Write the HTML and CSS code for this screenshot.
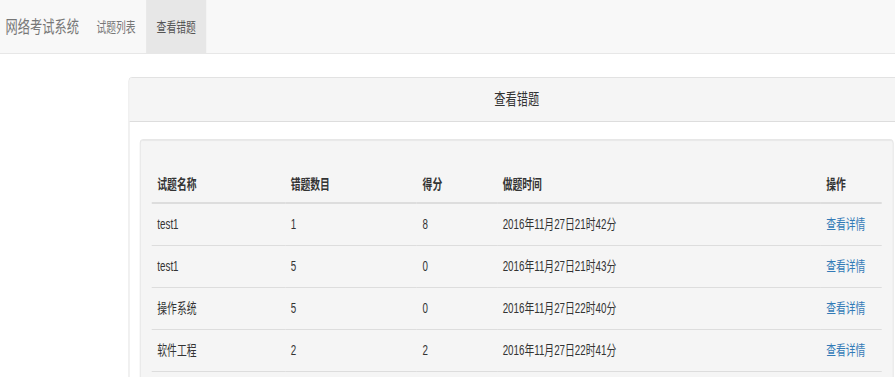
FILE: index.html
```html
<!DOCTYPE html>
<html lang="zh-CN">
<head>
    <meta charset="UTF-8">
    <meta name="viewport" content="width=device-width, initial-scale=1.0">
    <title>查看错题</title>
    <link rel="stylesheet" href="styles.css">
</head>
<body>
    <div class="page">
        <nav class="navbar">
            <a class="brand" href="#">网络考试系统</a>
            <ul class="nav">
                <li><a href="#">试题列表</a></li>
                <li class="active"><a href="#">查看错题</a></li>
            </ul>
        </nav>

        <div class="main">
            <div class="panel">
                <div class="panel-heading">查看错题</div>
                <div class="panel-body">
                    <div class="well">
                        <table class="table">
                            <thead>
                                <tr>
                                    <th class="col-name">试题名称</th>
                                    <th class="col-wrong">错题数目</th>
                                    <th class="col-score">得分</th>
                                    <th class="col-time">做题时间</th>
                                    <th class="col-op">操作</th>
                                </tr>
                            </thead>
                            <tbody>
                                <tr>
                                    <td>test1</td>
                                    <td>1</td>
                                    <td>8</td>
                                    <td>2016年11月27日21时42分</td>
                                    <td><a href="#">查看详情</a></td>
                                </tr>
                                <tr>
                                    <td>test1</td>
                                    <td>5</td>
                                    <td>0</td>
                                    <td>2016年11月27日21时43分</td>
                                    <td><a href="#">查看详情</a></td>
                                </tr>
                                <tr>
                                    <td>操作系统</td>
                                    <td>5</td>
                                    <td>0</td>
                                    <td>2016年11月27日22时40分</td>
                                    <td><a href="#">查看详情</a></td>
                                </tr>
                                <tr>
                                    <td>软件工程</td>
                                    <td>2</td>
                                    <td>2</td>
                                    <td>2016年11月27日22时41分</td>
                                    <td><a href="#">查看详情</a></td>
                                </tr>
                            </tbody>
                        </table>
                    </div>
                </div>
            </div>
        </div>
    </div>
</body>
</html>
```

FILE: styles.css
```css
html, body {
    margin: 0;
    background: #fff;
}

body {
    font-family: "Liberation Sans", Arial, "Noto Sans CJK SC", sans-serif;
    font-size: 14px;
    line-height: 20px;
    color: #333;
    overflow: hidden;
}

/* the shot was taken at 1280px wide and squeezed to fit */
.page {
    width: 1280px;
    transform: scaleX(0.6992);
    transform-origin: 0 0;
    overflow: hidden;
}

.navbar {
    display: flex;
    height: 53px;
    background: #f8f8f8;
    border-bottom: 1px solid #e7e7e7;
}

.brand {
    display: flex;
    align-items: center;
    padding: 0 10px 0 8px;
    font-size: 17.5px;
    color: #777;
    text-decoration: none;
}

.nav {
    display: flex;
    margin: 0;
    padding: 0;
    list-style: none;
}

.nav a {
    display: flex;
    align-items: center;
    height: 100%;
    padding: 0 15px;
    color: #777;
    text-decoration: none;
}

.nav .active a {
    background: #e7e7e7;
    color: #555;
}

.main {
    padding: 23px 0 0 184px;
}

.panel {
    width: 1108px;
    background: #fff;
    border: 1px solid #ddd;
    border-radius: 4px;
}

.panel-heading {
    padding: 11px 15px 10px;
    font-size: 16px;
    line-height: 22px;
    text-align: center;
    background: #f5f5f5;
    border-bottom: 1px solid #ddd;
    border-radius: 3px 3px 0 0;
}

.panel-body {
    padding: 17px 15px 15px;
}

.well {
    padding: 26px 16px 20px;
    background: #f5f5f5;
    border: 1px solid #e3e3e3;
    border-radius: 4px;
    box-shadow: inset 0 1px 1px rgba(0,0,0,0.05);
}

.table {
    width: 100%;
    table-layout: fixed;
    border-collapse: collapse;
}

.table th {
    padding: 8px;
    text-align: left;
    vertical-align: bottom;
    font-weight: bold;
    border-bottom: 2px solid #ddd;
}

.table td {
    padding: 10px 8px;
    line-height: 21px;
    border-top: 1px solid #ddd;
}

.table tbody tr:last-child td {
    border-bottom: 1px solid #ddd;
}

.col-name { width: 174px; }
.col-wrong { width: 172px; }
.col-score { width: 98px; }
.col-time { width: 445px; }
.col-op { width: 71px; }

.table a {
    color: #337ab7;
    text-decoration: none;
}
```
